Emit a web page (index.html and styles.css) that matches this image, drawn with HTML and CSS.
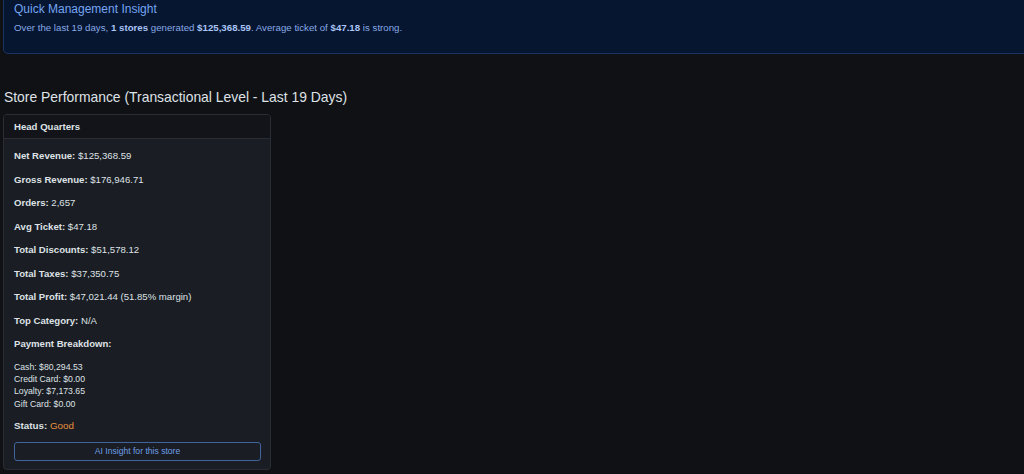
FILE: index.html
```html
<!DOCTYPE html>
<html lang="en">
<head>
<meta charset="utf-8">
<title>Store Performance</title>
<link rel="stylesheet" href="styles.css">
</head>
<body>
<div class="page">
  <section class="insight">
    <h3 class="insight-title">Quick Management Insight</h3>
    <p class="insight-text">Over the last 19 days, <strong>1 stores</strong> generated <strong>$125,368.59</strong>. Average ticket of <strong>$47.18</strong> is strong.</p>
  </section>

  <h2 class="section-title">Store Performance (Transactional Level - Last 19 Days)</h2>

  <div class="card">
    <div class="card-header">Head Quarters</div>
    <div class="card-body">
      <p class="row"><strong>Net Revenue:</strong> $125,368.59</p>
      <p class="row"><strong>Gross Revenue:</strong> $176,946.71</p>
      <p class="row"><strong>Orders:</strong> 2,657</p>
      <p class="row"><strong>Avg Ticket:</strong> $47.18</p>
      <p class="row"><strong>Total Discounts:</strong> $51,578.12</p>
      <p class="row"><strong>Total Taxes:</strong> $37,350.75</p>
      <p class="row"><strong>Total Profit:</strong> $47,021.44 (51.85% margin)</p>
      <p class="row"><strong>Top Category:</strong> N/A</p>
      <p class="row"><strong>Payment Breakdown:</strong></p>
      <ul class="payments">
        <li>Cash: $80,294.53</li>
        <li>Credit Card: $0.00</li>
        <li>Loyalty: $7,173.65</li>
        <li>Gift Card: $0.00</li>
      </ul>
      <p class="row status"><strong>Status:</strong> <span class="good">Good</span></p>
      <button class="ai-btn" type="button">AI Insight for this store</button>
    </div>
  </div>
</div>
</body>
</html>
```

FILE: styles.css
```css
* { box-sizing: border-box; }

html, body {
  margin: 0;
  padding: 0;
  background: #101115;
  overflow: hidden;
}

body {
  font-family: "Liberation Sans", Arial, sans-serif;
  color: #dee2e6;
  width: 1024px;
  height: 474px;
}

.page {
  padding-left: 3px;
}

.insight {
  margin-top: -12px;
  width: 1060px;
  height: 66px;
  background: #061530;
  border: 1px solid #1c3461;
  border-radius: 5px;
  padding: 12px 10px 0 10px;
}

.insight-title {
  margin: 0;
  font-size: 12px;
  line-height: 16px;
  font-weight: 400;
  color: #74a6f2;
}

.insight-text {
  margin: 4px 0 0 0;
  font-size: 9.7px;
  line-height: 14px;
  color: #86aae6;
}

.insight-text strong {
  color: #a9c6f6;
  font-weight: 700;
}

.section-title {
  margin: 33px 0 0 1px;
  font-size: 13.9px;
  line-height: 20px;
  font-weight: 400;
  color: #dfe2e6;
}

.card {
  margin-top: 7px;
  width: 268px;
  background: #1a1d23;
  border: 1px solid #2a2d33;
  border-radius: 4px;
  overflow: hidden;
}

.card-header {
  height: 24px;
  background: #121419;
  border-bottom: 1px solid #2a2d33;
  padding: 0 10px;
  font-size: 9.6px;
  line-height: 23px;
  font-weight: 700;
  color: #dee2e6;
}

.card-body {
  padding: 10px 9px 8px 10px;
}

.row {
  margin: 0 0 9.5px 0;
  font-size: 9.6px;
  line-height: 14px;
  color: #dee2e6;
}

.row strong {
  font-weight: 700;
}

.payments {
  list-style: none;
  margin: 0 0 9.3px 0;
  padding: 0;
  font-size: 8.7px;
  line-height: 12.4px;
  color: #dee2e6;
}

.status {
  font-size: 9.8px;
  margin-bottom: 9px;
}

.good {
  color: #e8913f;
  font-weight: 400;
}

.ai-btn {
  display: block;
  width: 100%;
  height: 19px;
  margin: 0;
  padding: 0;
  background: transparent;
  border: 1px solid #3f649e;
  border-radius: 3px;
  color: #6f9fe6;
  font-family: "Liberation Sans", Arial, sans-serif;
  font-size: 8.6px;
  line-height: 17px;
  text-align: center;
}
```
